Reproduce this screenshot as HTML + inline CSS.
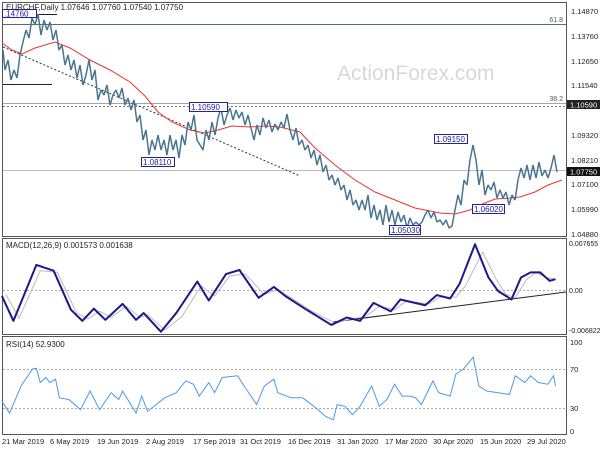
<!DOCTYPE html>
<html><head><style>
html,body{margin:0;padding:0;background:#fff;width:600px;height:450px;overflow:hidden}
svg{display:block;font-family:"Liberation Sans",sans-serif}
</style></head><body>
<svg width="600" height="450" viewBox="0 0 600 450" xmlns="http://www.w3.org/2000/svg">
<rect width="600" height="450" fill="#fff"/>
<rect x="2.5" y="2.5" width="564" height="234" fill="none" stroke="#555"/>
<rect x="2.5" y="238.5" width="564" height="96" fill="none" stroke="#555"/>
<rect x="2.5" y="336.5" width="564" height="98" fill="none" stroke="#555"/>
<text x="337" y="80" font-size="21" fill="#d8d8d8">ActionForex.com</text>
<line x1="3" y1="24.5" x2="566" y2="24.5" stroke="#5a6a70"/>
<line x1="3" y1="103.5" x2="566" y2="103.5" stroke="#9aa"/>
<line x1="3" y1="106.5" x2="566" y2="106.5" stroke="#777" stroke-dasharray="2,2"/>
<line x1="3" y1="170.5" x2="566" y2="170.5" stroke="#bbb"/>
<line x1="28" y1="14.5" x2="57" y2="14.5" stroke="#222"/>
<line x1="3" y1="84.5" x2="52" y2="84.5" stroke="#222"/>
<text x="563" y="22" font-size="7" fill="#555" text-anchor="end">61.8</text>
<text x="563" y="101" font-size="7" fill="#555" text-anchor="end">38.2</text>
<line x1="3" y1="47" x2="300" y2="176" stroke="#333" stroke-dasharray="2,2"/>
<polyline fill="none" stroke="#e33" stroke-width="1" points="2,43 12,50 22,54 35,48 55,42 70,48 90,60 110,70 130,82 145,96 158,112 172,122 190,130 205,133 218,130 232,126 250,127 265,126 280,127 292,130 300,132 315,148 335,165 355,180 375,192 395,200 415,208 440,213 455,214 470,210 480,205 495,199 510,198 520,197 535,192 548,185 562,180"/>
<polyline fill="none" stroke="#4a7590" stroke-width="1.5" stroke-linejoin="bevel" points="3,50 5,70 8,60 11,80 14,70 17,78 20,55 23,42 26,30 29,38 32,18 35,25 38,14 41,35 44,20 47,30 50,22 53,40 56,30 59,50 62,45 65,65 68,55 71,70 74,60 77,78 80,65 83,85 86,75 89,60 92,80 95,70 98,100 101,90 104,95 107,85 110,105 113,95 116,90 119,98 122,88 125,105 128,98 131,110 134,100 137,122 140,115 143,140 146,130 149,155 152,140 155,150 158,135 161,150 164,140 167,155 170,135 173,150 176,140 179,158 182,135 185,145 188,122 191,130 194,115 197,140 200,145 203,150 206,130 209,140 212,122 215,135 218,118 221,108 224,125 227,115 230,108 233,120 236,110 239,118 242,112 245,125 248,115 251,128 254,140 257,125 260,135 263,118 266,128 269,120 272,132 275,124 278,130 281,122 284,128 287,114 290,130 293,140 296,128 299,145 302,140 305,150 308,145 311,158 314,150 317,165 320,155 323,172 326,165 329,180 332,175 335,185 338,178 341,190 344,185 347,200 350,190 353,205 356,200 359,210 362,200 365,210 368,195 371,218 374,205 377,220 380,210 383,225 386,205 389,222 392,210 395,225 398,212 401,222 404,215 407,228 410,218 413,225 416,222 419,225 422,222 425,215 428,210 431,218 434,212 437,222 440,220 443,225 446,220 449,228 452,226 455,210 458,195 461,205 464,180 467,185 470,160 473,145 476,160 479,185 482,170 485,195 488,185 491,190 494,182 497,198 500,190 503,198 506,192 509,205 512,195 515,200 518,180 521,168 524,178 527,165 530,180 533,165 536,178 539,162 542,176 545,170 548,178 551,168 554,155 557,172"/>
<g font-size="8" fill="#22229a">
<rect x="2.5" y="9.5" width="34" height="8" fill="#fff" stroke="#22229a"/><text x="4" y="16.5">.14760</text>
<rect x="189.5" y="102.5" width="38" height="9" fill="#fff" stroke="#22229a"/><text x="191" y="110">1.10590</text>
<rect x="141.5" y="157.5" width="33" height="9" fill="#fff" stroke="#22229a"/><text x="143" y="165">1.08110</text>
<rect x="434.5" y="134.5" width="33" height="9" fill="#fff" stroke="#22229a"/><text x="436" y="142">1.09150</text>
<rect x="472.5" y="204.5" width="32" height="9" fill="#fff" stroke="#22229a"/><text x="474" y="212">1.06020</text>
<rect x="389.5" y="225.5" width="31" height="9" fill="#fff" stroke="#22229a"/><text x="391" y="233">1.05030</text>
</g>
<text x="6" y="10" font-size="8" fill="#222">EURCHF,Daily  1.07646 1.07760 1.07540 1.07750</text>
<g font-size="7.5" fill="#222">
<text x="571" y="14">1.14870</text><text x="571" y="39">1.13760</text><text x="571" y="64">1.12650</text>
<text x="571" y="88">1.11540</text><text x="571" y="138">1.09320</text><text x="571" y="163">1.08210</text>
<text x="571" y="187">1.07100</text><text x="571" y="212">1.05990</text><text x="571" y="237">1.04880</text>
</g>
<rect x="567" y="100" width="33" height="9" fill="#222"/><text x="570" y="107.5" font-size="7.5" fill="#fff">1.10590</text>
<rect x="567" y="167" width="33" height="9" fill="#111"/><text x="570" y="174.5" font-size="7.5" fill="#fff">1.07750</text>
<text x="6" y="248" font-size="8" fill="#222">MACD(12,26,9) 0.001573 0.001638</text>
<line x1="3" y1="290.5" x2="566" y2="290.5" stroke="#aaa" stroke-dasharray="2,2"/>
<line x1="333" y1="322" x2="566" y2="292" stroke="#222"/>
<g transform="translate(0,230) scale(0.3831,0.339)">
<polyline fill="none" stroke="#bbb" stroke-width="1" vector-effect="non-scaling-stroke" points="15,190 50,260 105,120 150,125 200,245 230,262 260,240 290,258 330,225 365,258 385,250 430,295 475,255 525,165 560,195 600,135 640,130 690,190 725,175 760,200 815,240 875,275 915,262 955,255 990,225 1030,235 1060,210 1120,218 1150,198 1190,198 1215,165 1260,65 1295,145 1320,190 1345,200 1375,145 1400,125 1425,140 1450,145"/>
<polyline fill="none" stroke="#1a1a8a" stroke-width="2" vector-effect="non-scaling-stroke" stroke-linejoin="round" points="5,195 35,268 95,103 140,120 185,235 215,268 245,232 275,265 320,218 355,265 375,245 420,300 460,245 515,152 545,208 590,130 625,118 675,200 715,168 745,195 800,235 865,280 905,258 940,268 975,215 1020,240 1045,205 1110,222 1140,192 1175,202 1200,158 1240,42 1275,140 1300,180 1335,205 1360,140 1385,125 1410,125 1435,150 1450,145"/>
</g>
<g font-size="7" fill="#222">
<text x="569" y="246">0.007655</text><text x="569" y="293">0.00</text><text x="569" y="333">-0.006822</text>
</g>
<text x="6" y="347" font-size="8" fill="#222">RSI(14) 52.9300</text>
<line x1="3" y1="369.5" x2="566" y2="369.5" stroke="#aaa" stroke-dasharray="2,2"/>
<line x1="3" y1="408.5" x2="566" y2="408.5" stroke="#aaa" stroke-dasharray="2,2"/>
<g transform="translate(0,230) scale(0.3831,0.339)">
<polyline fill="none" stroke="#4a9be8" stroke-width="1" vector-effect="non-scaling-stroke" points="5,505 25,540 55,460 85,410 95,408 105,450 120,435 130,450 145,440 155,495 180,500 210,530 235,475 260,530 290,480 310,500 320,475 355,540 370,490 385,535 430,495 460,480 485,445 505,455 520,490 545,450 560,480 580,435 620,430 640,465 670,515 690,460 715,440 725,480 760,495 790,495 825,525 850,550 870,560 880,515 900,520 920,545 940,520 970,460 990,520 1010,500 1030,455 1050,490 1070,490 1085,495 1100,515 1130,445 1145,480 1175,490 1190,425 1210,410 1235,375 1250,460 1270,475 1300,480 1330,485 1345,430 1370,450 1385,430 1405,450 1430,455 1445,430 1450,460"/>
</g>
<g font-size="7.5" fill="#222">
<text x="570" y="345">100</text><text x="570" y="372">70</text><text x="570" y="411">30</text><text x="570" y="434">0</text>
</g>
<g font-size="7.5" fill="#222">
<text x="2" y="444">21 Mar 2019</text><text x="50" y="444">6 May 2019</text><text x="97" y="444">19 Jun 2019</text>
<text x="146" y="444">2 Aug 2019</text><text x="193" y="444">17 Sep 2019</text><text x="240" y="444">31 Oct 2019</text>
<text x="288" y="444">16 Dec 2019</text><text x="337" y="444">31 Jan 2020</text><text x="385" y="444">17 Mar 2020</text>
<text x="433" y="444">30 Apr 2020</text><text x="480" y="444">15 Jun 2020</text><text x="527" y="444">29 Jul 2020</text>
</g>
</svg>
</body></html>
